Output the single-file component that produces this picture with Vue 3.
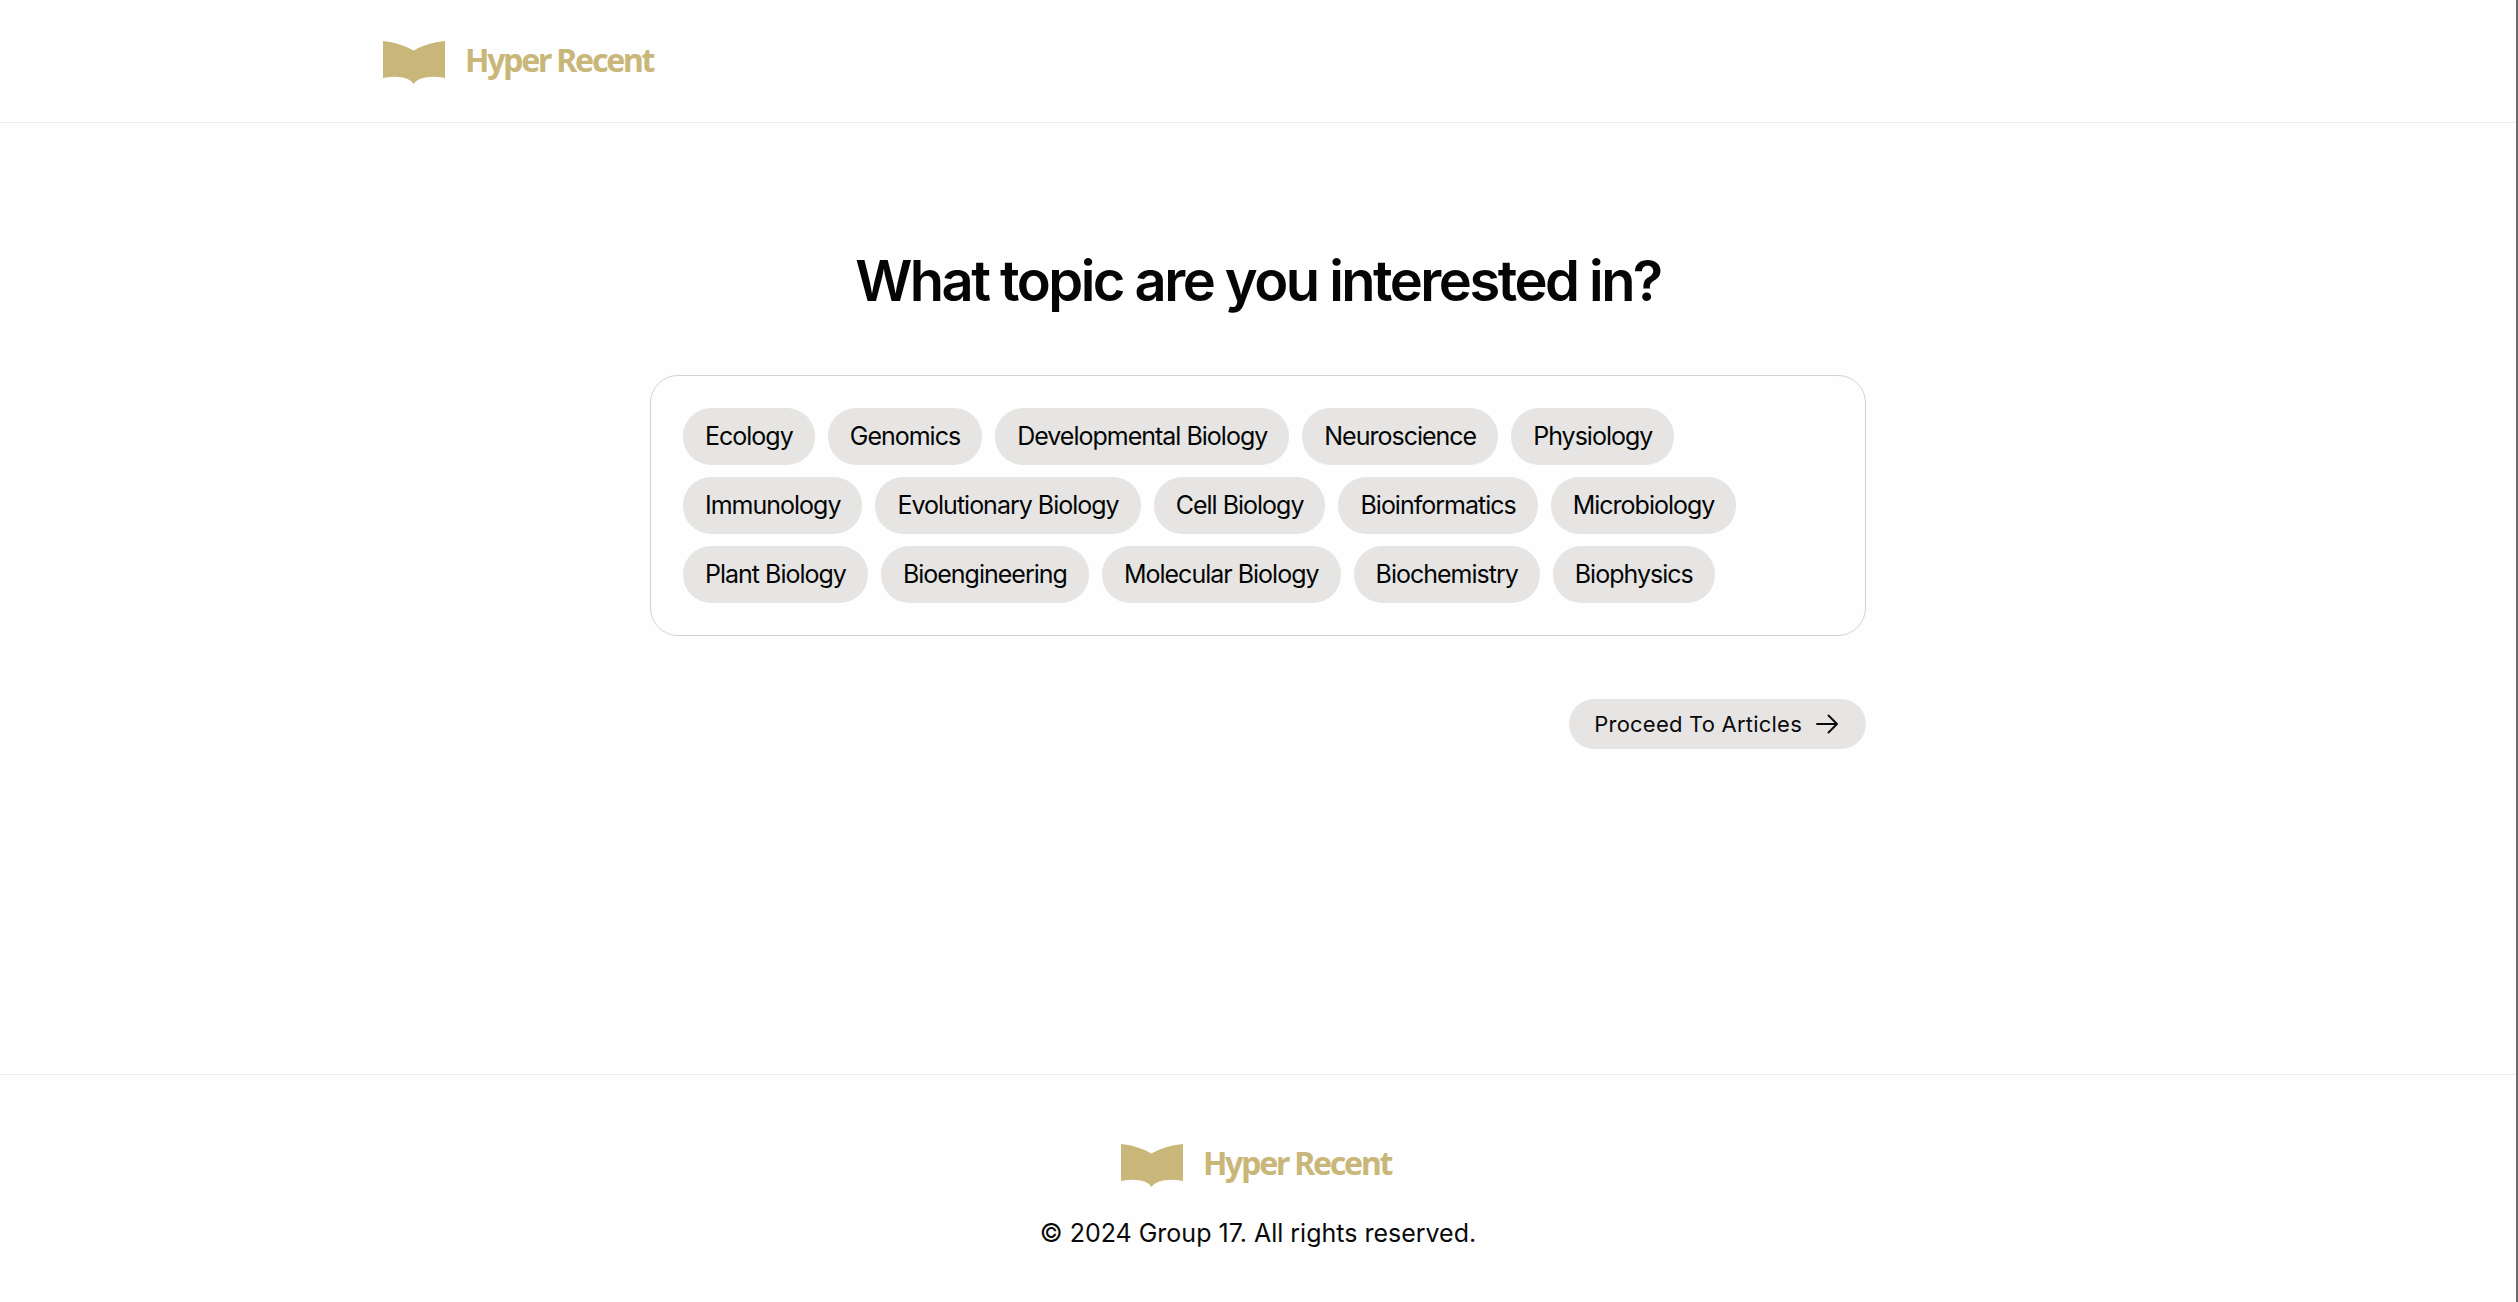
<script setup>
import { ref } from 'vue'

const topics = [
  'Ecology', 'Genomics', 'Developmental Biology', 'Neuroscience', 'Physiology',
  'Immunology', 'Evolutionary Biology', 'Cell Biology', 'Bioinformatics', 'Microbiology',
  'Plant Biology', 'Bioengineering', 'Molecular Biology', 'Biochemistry', 'Biophysics',
]

const selected = ref([])

function toggle(topic) {
  selected.value = selected.value.includes(topic)
    ? selected.value.filter((t) => t !== topic)
    : [...selected.value, topic]
}
</script>

<template>
  <div class="page">
    <header class="header">
      <div class="header-inner">
        <a class="brand" href="#">
          <svg class="brand-icon" viewBox="0 0 62 43" aria-hidden="true">
            <path d="M0 0Q18 2 30.500 9.500Q43 2 62 0V37Q38 33 30.500 43Q24 33 0 37Z" fill="currentColor" />
          </svg>
          <span class="brand-name">Hyper Recent</span>
        </a>
      </div>
    </header>

    <main class="main">
      <h1 class="title">What topic are you interested in?</h1>
      <section class="topics" aria-label="Topics">
        <button
          v-for="topic in topics"
          :key="topic"
          type="button"
          class="topic"
          :class="{ active: selected.includes(topic) }"
          :aria-pressed="selected.includes(topic)"
          @click="toggle(topic)"
        >{{ topic }}</button>
      </section>
      <div class="actions">
        <button type="button" class="proceed">
          <span>Proceed To Articles</span>
          <svg class="arrow" viewBox="0 0 22 20" aria-hidden="true">
            <path d="M1 10H21M12.500 1.500L21 10L12.500 18.500" fill="none" stroke="currentColor" stroke-width="1.900" stroke-linecap="round" stroke-linejoin="round" />
          </svg>
        </button>
      </div>
    </main>

    <footer class="footer">
      <a class="brand" href="#">
        <svg class="brand-icon" viewBox="0 0 62 43" aria-hidden="true">
          <path d="M0 0Q18 2 30.500 9.500Q43 2 62 0V37Q38 33 30.500 43Q24 33 0 37Z" fill="currentColor" />
        </svg>
        <span class="brand-name">Hyper Recent</span>
      </a>
      <p class="copyright">© 2024 Group 17. All rights reserved.</p>
    </footer>
  </div>
</template>

<style>
body {
  background: #fefefe;
}
</style>

<style scoped>
.page {
  box-sizing: border-box;
  min-height: 100vh;
  display: flex;
  flex-direction: column;
  border-right: 2px solid #6b6b6d;
  background: #fefefe;
  color: #0a0a0a;
  font-family: Inter, "Liberation Sans", sans-serif;
}

.header {
  padding: 38px 24px 36px;
  border-bottom: 1px solid #ececec;
}

.header-inner {
  display: flex;
  max-width: 1750px;
  margin: 0 auto;
}

.brand {
  display: flex;
  align-items: center;
  gap: 20px;
  padding-right: 4px;
  color: #c9b679;
  text-decoration: none;
}

.brand-icon {
  width: 62px;
  height: 43px;
}

.brand-name {
  padding-bottom: 4px;
  font-family: "Noto Sans", "Open Sans", sans-serif;
  font-size: 32px;
  font-weight: 700;
  line-height: 44px;
  letter-spacing: -0.07em;
}

.main {
  flex: 1;
  box-sizing: border-box;
  width: 100%;
  max-width: 1216px;
  margin: 0 auto;
  padding-top: 124px;
}

.title {
  margin: 0 0 60px;
  color: #050505;
  font-size: 56px;
  font-weight: 600;
  line-height: 68px;
  letter-spacing: -0.045em;
  text-align: center;
}

.topics {
  display: flex;
  flex-wrap: wrap;
  gap: 12px 13px;
  padding: 32px 96px 32px 32px;
  border: 1px solid #d2d2d2;
  border-radius: 28px;
}

.topic {
  padding: 0 22px;
  border: 0;
  border-radius: 28px;
  background: #e6e5e3;
  color: #050505;
  font-family: inherit;
  font-size: 25px;
  font-weight: 400;
  line-height: 57px;
  letter-spacing: -1px;
  cursor: pointer;
}

.topic.active {
  background: #c9b679;
}

.actions {
  display: flex;
  justify-content: flex-end;
  margin-top: 63px;
}

.proceed {
  display: flex;
  align-items: center;
  gap: 14px;
  padding: 0 28px 0 25px;
  border: 0;
  border-radius: 25px;
  background: #e6e5e3;
  color: inherit;
  font-family: inherit;
  font-size: 22px;
  line-height: 50px;
  letter-spacing: 0.01em;
  cursor: pointer;
}

.arrow {
  width: 22px;
  height: 20px;
}

.footer {
  display: flex;
  flex-direction: column;
  align-items: center;
  gap: 26px;
  padding: 66px 24px 51px;
  border-top: 1px solid #ebebed;
}

.copyright {
  margin: 0;
  font-size: 25px;
  line-height: 36px;
}
</style>
